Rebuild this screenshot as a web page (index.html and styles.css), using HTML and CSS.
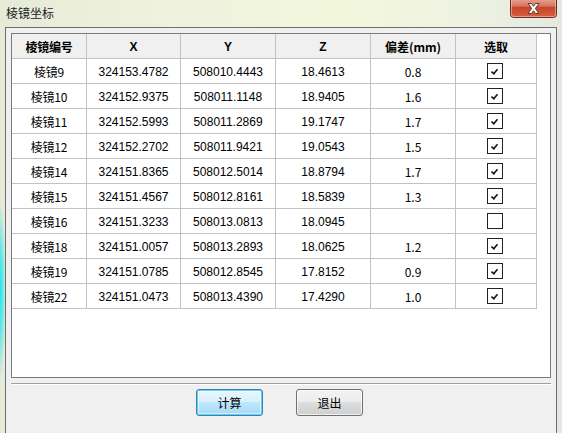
FILE: index.html
```html
<!DOCTYPE html>
<html>
<head>
<meta charset="utf-8">
<link rel="stylesheet" href="styles.css">
</head>
<body>
<div class="window">
  <div class="titlebar">
    <span class="title">棱镜坐标</span>
    <div class="close">
      <svg width="47" height="18" viewBox="0 0 47 18">
        <defs>
          <linearGradient id="cg" x1="0" y1="0" x2="0" y2="1">
            <stop offset="0" stop-color="#eab3a6"/>
            <stop offset="0.45" stop-color="#d8725d"/>
            <stop offset="0.5" stop-color="#c4452c"/>
            <stop offset="1" stop-color="#d9613f"/>
          </linearGradient>
        </defs>
        <rect x="0.5" y="-3" width="46" height="20.5" rx="3" fill="url(#cg)" stroke="#6b2a22"/>
        <rect x="1.5" y="-2" width="44" height="18.5" rx="2" fill="none" stroke="#f3c9bd" stroke-opacity="0.6"/>
        <path d="M18 3.5 L21.5 3.5 L23.5 6.3 L25.5 3.5 L29 3.5 L25.3 8.5 L29 13.5 L25.5 13.5 L23.5 10.7 L21.5 13.5 L18 13.5 L21.7 8.5 Z" fill="#ffffff" stroke="#5a2a24" stroke-width="0.9" stroke-linejoin="round"/>
      </svg>
    </div>
  </div>
  <div class="client">
    <div class="grid-box">
      <div class="grid">
        <div class="row head">
          <div class="c c1">棱镜编号</div><div class="c c2">X</div><div class="c c3">Y</div><div class="c c4">Z</div><div class="c c5">偏差(mm)</div><div class="c c6">选取</div>
        </div>
        <div class="row"><div class="c c1">棱镜9</div><div class="c c2">324153.4782</div><div class="c c3">508010.4443</div><div class="c c4">18.4613</div><div class="c c5">0.8</div><div class="c c6"><span class="cb on"></span></div></div>
        <div class="row"><div class="c c1">棱镜10</div><div class="c c2">324152.9375</div><div class="c c3">508011.1148</div><div class="c c4">18.9405</div><div class="c c5">1.6</div><div class="c c6"><span class="cb on"></span></div></div>
        <div class="row"><div class="c c1">棱镜11</div><div class="c c2">324152.5993</div><div class="c c3">508011.2869</div><div class="c c4">19.1747</div><div class="c c5">1.7</div><div class="c c6"><span class="cb on"></span></div></div>
        <div class="row"><div class="c c1">棱镜12</div><div class="c c2">324152.2702</div><div class="c c3">508011.9421</div><div class="c c4">19.0543</div><div class="c c5">1.5</div><div class="c c6"><span class="cb on"></span></div></div>
        <div class="row"><div class="c c1">棱镜14</div><div class="c c2">324151.8365</div><div class="c c3">508012.5014</div><div class="c c4">18.8794</div><div class="c c5">1.7</div><div class="c c6"><span class="cb on"></span></div></div>
        <div class="row"><div class="c c1">棱镜15</div><div class="c c2">324151.4567</div><div class="c c3">508012.8161</div><div class="c c4">18.5839</div><div class="c c5">1.3</div><div class="c c6"><span class="cb on"></span></div></div>
        <div class="row"><div class="c c1">棱镜16</div><div class="c c2">324151.3233</div><div class="c c3">508013.0813</div><div class="c c4">18.0945</div><div class="c c5"></div><div class="c c6"><span class="cb"></span></div></div>
        <div class="row"><div class="c c1">棱镜18</div><div class="c c2">324151.0057</div><div class="c c3">508013.2893</div><div class="c c4">18.0625</div><div class="c c5">1.2</div><div class="c c6"><span class="cb on"></span></div></div>
        <div class="row"><div class="c c1">棱镜19</div><div class="c c2">324151.0785</div><div class="c c3">508012.8545</div><div class="c c4">17.8152</div><div class="c c5">0.9</div><div class="c c6"><span class="cb on"></span></div></div>
        <div class="row"><div class="c c1">棱镜22</div><div class="c c2">324151.0473</div><div class="c c3">508013.4390</div><div class="c c4">17.4290</div><div class="c c5">1.0</div><div class="c c6"><span class="cb on"></span></div></div>
      </div>
    </div>
    <div class="sep"></div>
    <div class="buttons">
      <button class="btn default">计算</button>
      <button class="btn">退出</button>
    </div>
  </div>
</div>
</body>
</html>
```
FILE: styles.css
```css
html, body {
  margin: 0;
  padding: 0;
}
body {
  width: 562px;
  height: 433px;
  overflow: hidden;
  font-family: "Liberation Sans", "Noto Sans CJK SC", sans-serif;
  font-size: 12px;
  color: #000;
  background:
    radial-gradient(ellipse 6px 90px at 0px 290px, #19e6f0 0%, rgba(25,230,240,0.6) 50%, rgba(25,230,240,0) 100%),
    radial-gradient(ellipse 40px 10px at 350px 433px, rgba(160,160,240,0.7), rgba(160,160,240,0)),
    linear-gradient(90deg, #e6ead8 0%, #eef2de 30%, #f2f7dc 60%, #eef2e2 85%, #e4e8e0 100%);
}
.window {
  display: flex;
  flex-direction: column;
}
.titlebar {
  height: 27px;
  display: flex;
  align-items: flex-start;
  position: relative;
}
.title {
  margin-left: 6px;
  margin-top: 5px;
  font-family: "Noto Sans CJK SC", sans-serif;
  font-size: 12px;
  line-height: 16px;
  color: #1a1a1a;
}
.close {
  margin-left: auto;
  margin-right: 5px;
  margin-top: 0;
  height: 18px;
  width: 47px;
}
.close svg {
  display: block;
}
.client {
  margin: 0 5px;
  height: 400px;
  border: 1px solid #6e6e6e;
  background: #f0f0f0;
  padding: 5px 5px 0 5px;
  display: flex;
  flex-direction: column;
}
.grid-box {
  height: 343px;
  border: 1px solid #7a7a7a;
  background: #fff;
}
.row {
  display: flex;
  height: 25px;
}
.c {
  box-sizing: border-box;
  height: 25px;
  border-right: 1px solid #c2c2c2;
  border-bottom: 1px solid #c2c2c2;
  display: flex;
  align-items: center;
  justify-content: center;
  white-space: nowrap;
  padding-top: 1px;
}
.head .c {
  background: #f0f0f0;
  font-weight: bold;
}
.c1 { width: 75px; }
.c2 { width: 94px; }
.c3 { width: 95px; }
.c4 { width: 95px; }
.c5 { width: 85px; }
.c6 { width: 81px; }
.row .c1, .row .c5 { font-family: "Noto Sans CJK SC", "Liberation Sans", sans-serif; }
.row .c1 { letter-spacing: -0.2px; }
.cb {
  display: block;
  box-sizing: border-box;
  width: 16px;
  height: 16px;
  border: 1px solid #222;
  background: #fff;
  margin-left: -2px;
  margin-top: -1px;
  position: relative;
}
.cb.on::after {
  content: "";
  position: absolute;
  left: 4px;
  top: 3px;
  width: 3px;
  height: 6px;
  border-right: 2px solid #111;
  border-bottom: 2px solid #111;
  transform: rotate(40deg) scale(0.8);
}
.sep {
  margin-top: 5px;
  height: 1px;
  background: #a0a0a0;
  border-bottom: 1px solid #fff;
  margin-right: 0;
}
.buttons {
  display: flex;
  gap: 33px;
  padding-left: 185px;
  margin-top: 4px;
}
.btn {
  width: 67px;
  height: 27px;
  box-sizing: border-box;
  border: 1px solid #707070;
  border-radius: 3px;
  background: linear-gradient(#f3f3f3 0%, #ececec 48%, #dddddd 50%, #cfcfcf 100%);
  font-family: "Noto Sans CJK SC", sans-serif;
  font-size: 12px;
  color: #000;
  padding: 0;
  box-shadow: inset 0 0 0 1px rgba(255,255,255,0.7);
}
.btn.default {
  border-color: #3c7fb1;
  background: linear-gradient(#eaf6fd 0%, #d9f0fc 48%, #bee6fd 50%, #a7d9f5 100%);
  box-shadow: inset 0 0 0 1px #5ed0f5, inset 0 0 0 2px rgba(255,255,255,0.5);
}
```
